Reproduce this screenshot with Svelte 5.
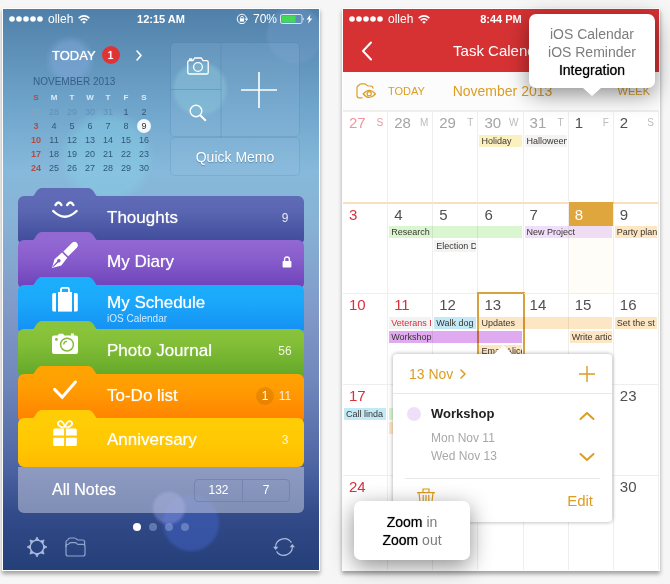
<script>
  const miniHead = ['S', 'M', 'T', 'W', 'T', 'F', 'S'];
  const miniWeeks = [
    [27, 28, 29, 30, 31, 1, 2],
    [3, 4, 5, 6, 7, 8, 9],
    [10, 11, 12, 13, 14, 15, 16],
    [17, 18, 19, 20, 21, 22, 23],
    [24, 25, 26, 27, 28, 29, 30]
  ];

  const folders = [
    { id: 'thoughts', name: 'Thoughts', count: '9' },
    { id: 'diary', name: 'My Diary', locked: true },
    { id: 'schedule', name: 'My Schedule', sub: 'iOS Calendar' },
    { id: 'photo', name: 'Photo Journal', count: '56' },
    { id: 'todo', name: 'To-Do list', count: '11', badge: '1' },
    { id: 'anniversary', name: 'Anniversary', count: '3' }
  ];

  const weeks = [
    {
      days: [27, 28, 29, 30, 31, 1, 2],
      events: [
        { t: 'Holiday', col: 4, slot: 1, tone: 'yellow' },
        { t: 'Halloween', col: 5, slot: 1, tone: 'grey' }
      ]
    },
    {
      days: [3, 4, 5, 6, 7, 8, 9],
      events: [
        { t: 'Research', col: 2, span: 3, slot: 1, tone: 'green' },
        { t: 'New Project', col: 5, span: 2, slot: 1, tone: 'lilac' },
        { t: 'Party plan', col: 7, slot: 1, tone: 'sand' },
        { t: 'Election Day', col: 3, slot: 2, tone: 'grey' }
      ]
    },
    {
      days: [10, 11, 12, 13, 14, 15, 16],
      holiday: 11,
      events: [
        { t: 'Veterans Day', col: 2, slot: 1, tone: 'holiday' },
        { t: 'Walk dog', col: 3, slot: 1, tone: 'blue' },
        { t: 'Updates', col: 4, span: 3, slot: 1, tone: 'sand' },
        { t: 'Set the st', col: 7, slot: 1, tone: 'sand' },
        { t: 'Workshop', col: 2, span: 3, slot: 2, tone: 'purple' },
        { t: 'Write article', col: 6, slot: 2, tone: 'sand' },
        { t: 'Email Alice', col: 4, slot: 3, tone: 'sand' }
      ]
    },
    {
      days: [17, 18, 19, 20, 21, 22, 23],
      events: [
        { t: 'Call linda', col: 1, slot: 1, tone: 'blue' },
        { t: '', col: 2, slot: 1, tone: 'green' },
        { t: '', col: 2, slot: 2, tone: 'sand' },
        { t: '', col: 6, slot: 1, tone: 'sand' }
      ]
    },
    { days: [24, 25, 26, 27, 28, 29, 30], events: [] }
  ];
</script>

{#snippet carrier()}
  <span class="carrier">
    <svg width="34" height="6" viewBox="0 0 34 6" aria-hidden="true">
      {#each [0, 1, 2, 3, 4] as n}<circle cx={3 + n * 7} cy="3" r="2.8" fill="#fff" />{/each}
    </svg>
    <span>olleh</span>
    <svg width="12" height="9" viewBox="0 0 12 9" fill="none" stroke="#fff" stroke-width="1.5" aria-hidden="true">
      <path d="M.6 3.1Q6-1.4 11.4 3.1M2.6 5.3Q6 2.5 9.4 5.3" />
      <path d="M6 8.8 4.1 6.9Q6 5.4 7.9 6.9Z" fill="#fff" stroke="none" />
    </svg>
  </span>
{/snippet}

{#snippet folderIcon(id)}
  <svg class="ficon" width="28" height="28" viewBox="0 0 28 28" fill="#fff" aria-hidden="true">
    {#if id === 'thoughts'}
      <g fill="none" stroke="#fff" stroke-width="2.4" stroke-linecap="round">
        <path d="M4.5 8Q7.6 3 10.4 8M16.2 8Q19.4 3 22.4 8M2.2 14Q13.8 25.5 25.6 14" />
      </g>
    {:else if id === 'diary'}
      <path d="M12.4 10.4 21.4 1.6Q23.6-.1 25.8 1.8 27.8 4 26 6.4L17.2 15.3Z" />
      <path d="M1 27 3.5 18.2 11 11.6 16.3 16.8 10.3 24.4ZM2.4 26 7.2 21.4A1.7 1.7 0 1 0 6.2 20.3L1.7 25.2Z" fill-rule="evenodd" />
    {:else if id === 'schedule'}
      <path d="M2.8 7H5V25.6H2.8Q1.2 25.6 1.2 24V8.6Q1.2 7 2.8 7ZM23 7H25.2Q26.8 7 26.8 8.6V24Q26.8 25.6 25.2 25.6H23Z" />
      <path d="M7 6H21V25.6H7Z" />
      <path d="M10 6V3.4Q10 1.9 11.5 1.9H16.5Q18 1.9 18 3.4V6" fill="none" stroke="#fff" stroke-width="1.8" />
    {:else if id === 'photo'}
      <path d="M3 5.4H6.5L8 3.8H12L13.4 5.4H20V3.6H23V5.4H25Q27 5.4 27 7.4V22Q27 24 25 24H3Q1 24 1 22V7.4Q1 5.4 3 5.4Z" />
      <circle cx="16" cy="14.6" r="6.4" fill="none" stroke="#84bd35" stroke-width="1.5" />
      <path d="M12.8 14.6A3.2 3.2 0 0 1 16 11.4" fill="none" stroke="#84bd35" stroke-width="1.4" />
      <circle cx="5.4" cy="9.4" r="1.4" fill="#84bd35" />
    {:else if id === 'todo'}
      <path d="M3.6 14.4 11.2 22.2 24.4 7" fill="none" stroke="#fff" stroke-width="3" stroke-linecap="round" />
    {:else}
      <path d="M3.8 9.4H13.1V16.4H2.2V11Q2.2 9.4 3.8 9.4ZM14.9 9.4H24.2Q25.8 9.4 25.8 11V16.4H14.9ZM2.2 18.8H13.1V27H3.8Q2.2 27 2.2 25.4ZM14.9 18.8H25.8V25.4Q25.8 27 24.2 27H14.9Z" />
      <path d="M13.5 8.6C8 8 5.5 5 7.6 2.8 10 1 12.8 3 14 8 15.2 3 18 1 20.4 2.8 22.5 5 20 8 14.5 8.6" fill="none" stroke="#fff" stroke-width="1.8" />
    {/if}
  </svg>
{/snippet}

{#snippet chevron(d, w, h, sw = 2)}
  <svg width={w} height={h} viewBox="0 0 {w} {h}" fill="none" stroke="currentColor" stroke-width={sw} stroke-linecap="round" stroke-linejoin="round" aria-hidden="true"><path {d} /></svg>
{/snippet}

<main>
  <section class="phone notes">
    <header class="status">
      {@render carrier()}
      <time>12:15 AM</time>
      <span class="power">
        <svg width="12" height="12" viewBox="0 0 12 12" fill="none" stroke="#fff" aria-hidden="true">
          <path d="M9.8 8.6A4.7 4.7 0 1 1 10.6 5.6" />
          <path d="M8.6 5.6H12.4L10.5 8Z" fill="#fff" stroke="none" />
          <rect x="3.9" y="5.4" width="4.2" height="3.2" fill="#fff" stroke="none" />
          <path d="M4.7 5.6V4.6Q4.7 3.3 6 3.3 7.3 3.3 7.3 4.6V5.6" stroke-width=".9" />
        </svg>
        <span>70%</span>
        <svg class="battery" width="33" height="10" viewBox="0 0 33 10" aria-hidden="true">
          <rect x=".5" y=".5" width="21.5" height="9" rx="1.8" fill="none" stroke="#fff" stroke-opacity=".8" />
          <rect x="1.6" y="1.6" width="14" height="6.8" rx=".6" fill="#43d85a" />
          <path d="M23 3.3Q24.6 5 23 6.7Z" fill="#fff" />
          <path d="M30.4 .6 26.6 5.6H29L28 9.6 32.4 4.4H29.8Z" fill="#fff" />
        </svg>
      </span>
    </header>

    <div class="top">
      <div class="mini">
        <button class="today" type="button">
          <span>TODAY</span>
          <b>1</b>
          {@render chevron('M2 2 6 6.5 2 11', 8, 13, 1.6)}
        </button>
        <h2>NOVEMBER 2013</h2>
        <table>
          <thead>
            <tr>{#each miniHead as d}<th scope="col">{d}</th>{/each}</tr>
          </thead>
          <tbody>
            {#each miniWeeks as week, w}
              <tr>
                {#each week as day}
                  <td class:past={w === 0 && day > 7}><span class:now={w === 1 && day === 9}>{day}</span></td>
                {/each}
              </tr>
            {/each}
          </tbody>
        </table>
      </div>
      <div class="quick">
        <button type="button" aria-label="Camera" class="cam">
          <svg width="22" height="18" viewBox="0 0 22 18" fill="none" stroke="#fff" stroke-width="1.3" stroke-linejoin="round" aria-hidden="true">
            <path d="M2.4 3.6H6L7.6 1H14.4L16 3.6H19.6Q21.2 3.6 21.2 5.2V15.4Q21.2 17 19.6 17H2.4Q.8 17 .8 15.4V5.2Q.8 3.6 2.4 3.6ZM2.6 3.4V2H4.8V3.4" />
            <circle cx="11" cy="10" r="4.4" />
          </svg>
        </button>
        <button type="button" aria-label="Add" class="add">
          <svg width="36" height="36" viewBox="0 0 36 36" stroke="#fff" stroke-width="1.6" aria-hidden="true"><path d="M18 0V36M0 18H36" /></svg>
        </button>
        <button type="button" aria-label="Search" class="find">
          <svg width="18" height="18" viewBox="0 0 18 18" fill="none" stroke="#fff" aria-hidden="true">
            <circle cx="7" cy="7" r="5.8" stroke-width="1.4" /><path d="M11.2 11.2 16.8 16.8" stroke-width="2" />
          </svg>
        </button>
        <button type="button" class="memo">Quick Memo</button>
      </div>
    </div>

    <nav class="stack" aria-label="Folders">
      {#each folders as f}
        <button type="button" class="folder {f.id}">
          <svg class="tab" width="66" height="9" viewBox="0 0 66 9" aria-hidden="true"><path d="M0 9C3 8 4 1 9 0H57C62 1 63 8 66 9Z" /></svg>
          {@render folderIcon(f.id)}
          <span class="name">{f.name}{#if f.sub}<small>{f.sub}</small>{/if}</span>
          {#if f.badge}<span class="badge">{f.badge}</span>{/if}
          {#if f.count}<span class="count">{f.count}</span>{/if}
          {#if f.locked}
            <svg class="lock" width="10" height="12" viewBox="0 0 10 12" aria-hidden="true">
              <rect x=".6" y="5" width="8.8" height="6.6" rx=".8" fill="#fff" />
              <path d="M2.6 5.4V3.4Q2.6 1 5 1 7.4 1 7.4 3.4V5.4" fill="none" stroke="#fff" stroke-width="1.4" />
            </svg>
          {/if}
        </button>
      {/each}
      <div class="all">
        <span>All Notes</span>
        <div class="seg"><button type="button">132</button><button type="button">7</button></div>
      </div>
    </nav>

    <div class="pager"><i class="on"></i><i></i><i></i><i></i></div>

    <footer>
      <button type="button" aria-label="Settings">
        <svg width="22" height="22" viewBox="0 0 22 22" fill="none" stroke="#a9bbdc" stroke-width="1.3" aria-hidden="true">
          <circle cx="11" cy="11" r="6.8" />
          {#each [0, 45, 90, 135, 180, 225, 270, 315] as a}
            <path d="M9.4 4.2 11 1 12.6 4.2Z" fill="#a9bbdc" stroke-width=".8" transform="rotate({a} 11 11)" />
          {/each}
        </svg>
      </button>
      <button type="button" aria-label="Folders">
        <svg width="21" height="20" viewBox="0 0 21 20" fill="none" stroke="#8fa5cf" stroke-width="1.2" stroke-linejoin="round" aria-hidden="true">
          <path d="M1 17V9Q1 7.4 2.6 7.4 3.8 7.2 4.2 6.4 4.8 5.6 6 5.6H10Q11.2 5.6 11.8 6.6 12.4 7.4 13.6 7.4H18Q20 7.4 20 9.4V17Q20 19 18 19H3Q1 19 1 17Z" />
          <path d="M1 10V5Q1 3.4 2.6 3 3.6 1 5.4 1H9.6Q11 1 11.6 2.2 12.2 3 13.4 3H17.6Q19.6 3 19.6 5V8.4" />
        </svg>
      </button>
      <button type="button" aria-label="Sync" class="sync">
        <svg width="22" height="20" viewBox="0 0 22 20" fill="none" stroke="#a9bbdc" stroke-width="1.2" aria-hidden="true">
          <path d="M2.6 10.6A8.6 8.6 0 0 1 18.4 5.6M19.4 9.4A8.6 8.6 0 0 1 3.6 14.4" />
          <path d="M0 9.8H5.4L2.7 13ZM16.6 10.2H22L19.3 7Z" fill="#a9bbdc" stroke="none" />
        </svg>
      </button>
    </footer>
  </section>

  <section class="phone tasks">
    <div class="red">
      <header class="status">
        {@render carrier()}
        <time>8:44 PM</time>
        <span class="power"></span>
      </header>
      <div class="nav">
        <button type="button" aria-label="Back">{@render chevron('M10 1.5 2 10 10 18.5', 12, 20, 2)}</button>
        <h1>Task Calendar</h1>
      </div>
    </div>
    <div class="tools">
      <button type="button" aria-label="Show calendars">
        <svg width="20" height="16" viewBox="0 0 20 16" fill="none" stroke="currentColor" stroke-width="1.2" aria-hidden="true">
          <path d="M6.6 14.8H3Q1 14.8 1 12.8V4.4Q1 3 2.6 2.6 3.6 .8 5.4 .8H8.4Q10 .8 10.6 2 11.2 3 12.4 3H14.4Q17 3 17 5.4" />
          <path d="M7.2 11Q13.2 3.6 19.4 11 13.2 18 7.2 11Z" /><circle cx="13.2" cy="10.8" r="2.1" />
        </svg>
      </button>
      <button type="button" class="tday">TODAY</button>
      <h2>November 2013</h2>
      <button type="button">WEEK</button>
    </div>

    <div class="cal">
      {#each weeks as week, w}
        <div class="week">
          {#each week.days as day, i}
            <div
              class="day"
              class:sun={i === 0 || day === week.holiday}
              class:out={w === 0 && day > 7}
              class:current={w === 1 && day === 8}
              class:picked={w === 2 && day === 13}
              style="grid-column: {i + 1}"
            >
              <span>{day}{#if w === 0}<small>{miniHead[i]}</small>{/if}</span>
            </div>
          {/each}
          {#each week.events as e}
            <div class="event {e.tone}" style="grid-column: {e.col} / span {e.span ?? 1}; grid-row: {e.slot + 1}">{e.t}</div>
          {/each}
        </div>
      {/each}

      <article class="pop">
        <header>
          <button type="button" class="date">13 Nov {@render chevron('M2 2 6 6 2 10', 8, 12, 1.6)}</button>
          <button type="button" aria-label="Add event">
            <svg width="16" height="16" viewBox="0 0 16 16" stroke="currentColor" stroke-width="1.4" aria-hidden="true"><path d="M8 0V16M0 8H16" /></svg>
          </button>
        </header>
        <div class="detail">
          <i></i>
          <div>
            <h3>Workshop</h3>
            <p>Mon Nov 11</p>
            <p>Wed Nov 13</p>
          </div>
          <div class="step">
            <button type="button" aria-label="Previous">{@render chevron('M1.5 8 8 2 14.5 8', 16, 10)}</button>
            <button type="button" aria-label="Next">{@render chevron('M1.5 2 8 8 14.5 2', 16, 10)}</button>
          </div>
        </div>
        <footer>
          <button type="button" aria-label="Delete" class="trash">
            <svg width="18" height="18" viewBox="0 0 18 18" fill="none" stroke="currentColor" stroke-width="1.2" aria-hidden="true">
              <path d="M0 4.6H18M6 4.4V1H12V4.4M2 4.8 3.4 17.2H14.6L16 4.8M6.2 7V15M9 7V15M11.8 7V15" />
            </svg>
          </button>
          <button type="button">Edit</button>
        </footer>
      </article>
    </div>

    <aside class="tip sync-tip">iOS Calendar<br />iOS Reminder<br /><b>Integration</b></aside>
    <aside class="tip zoom-tip"><b>Zoom</b> in<br /><b>Zoom</b> out</aside>
  </section>
</main>

<style>
  :global(body) {
    margin: 0;
    background: #f6f6f6;
    font-family: 'Liberation Sans', Arial, sans-serif;
  }
  button {
    font: inherit;
    color: inherit;
    background: none;
    border: 0;
    padding: 0;
    margin: 0;
    display: flex;
    align-items: center;
    cursor: pointer;
  }
  h1, h2, h3, p {
    margin: 0;
    font-weight: 400;
  }
  svg {
    display: block;
    flex: none;
  }
  main {
    display: grid;
    grid-template-columns: 1fr 1fr;
    gap: 24px;
    padding: 9px 11px 14px 3px;
  }
  .phone {
    position: relative;
    min-width: 0;
    display: flex;
    flex-direction: column;
    box-shadow: 0 0 0 1px #fff, 0 3px 4px 1px rgba(0, 0, 0, 0.35);
  }
  .status {
    display: grid;
    grid-template-columns: 1fr auto 1fr;
    align-items: center;
    height: 20px;
    padding: 0 6px;
    color: #fff;
    font-size: 12px;
  }
  .status time {
    font-size: 11px;
    font-weight: 700;
  }
  .carrier, .power {
    display: flex;
    align-items: center;
    gap: 5px;
  }
  .power {
    justify-content: flex-end;
  }
  .battery {
    margin-left: -2px;
  }

  /* Notes home screen */
  .notes {
    color: #fff;
    background:
      radial-gradient(circle at 166px 499px, rgba(150, 160, 235, 0.4) 14px, transparent 18px),
      radial-gradient(circle at 188px 514px, rgba(62, 92, 185, 0.6) 26px, transparent 30px),
      radial-gradient(circle at 67px 51px, rgba(130, 170, 220, 0.5) 17px, transparent 25px),
      radial-gradient(circle at 292px 26px, rgba(120, 160, 210, 0.3) 26px, transparent 30px),
      radial-gradient(circle at 197px 80px, rgba(135, 200, 215, 0.45) 24px, transparent 29px),
      radial-gradient(circle at 104px 148px, rgba(135, 215, 235, 0.35) 36px, transparent 48px),
      linear-gradient(#5080a9, #6fa4ca 17%, #86b9db 29%, #87b2d5 38%, #8099c8 54%, #7088bb 66%, #4c63a2 82%, #324b89 90%, #253f79);
  }
  .top {
    display: flex;
    justify-content: space-between;
    padding: 14px 20px 21px 24px;
  }
  .mini {
    width: 126px;
  }
  .today {
    height: 24px;
    padding-left: 25px;
    font-size: 13px;
    text-shadow: 0 0 1px #fff;
  }
  .today b {
    width: 18px;
    line-height: 18px;
    margin: 0 15px 0 6px;
    border-radius: 50%;
    background: #e03434;
    font-size: 11px;
    font-weight: 400;
    text-align: center;
  }
  .mini h2 {
    margin: 8px 0 2px 6px;
    font-size: 10px;
    line-height: 14px;
    color: #355f85;
  }
  table {
    width: 100%;
    table-layout: fixed;
    border-collapse: collapse;
    font-size: 9px;
    line-height: 14px;
    text-align: center;
    color: #2f5876;
  }
  th, td {
    padding: 0;
    height: 14px;
  }
  th {
    font-size: 8px;
    color: #dceaf5;
  }
  td.past {
    color: #5f91b3;
  }
  th:first-child, td:first-child {
    color: #b8493f;
    font-weight: 700;
  }
  td.past:first-child {
    color: #8ba3ba;
    font-weight: 400;
  }
  .now {
    display: inline-block;
    width: 14px;
    border-radius: 50%;
    background: #f3f8fc;
    color: #333;
  }
  .quick {
    display: grid;
    grid-template: 46px 46px 38px / 50px 78px;
    gap: 1px 0;
  }
  .quick button {
    justify-content: center;
    background: rgba(160, 200, 230, 0.16);
    box-shadow: 0 0 0 1px rgba(70, 120, 170, 0.18);
  }
  .quick .cam {
    border-radius: 4px 0 0 0;
    padding-left: 3px;
  }
  .quick .add {
    grid-row: span 2;
    border-radius: 0 4px 4px 0;
    padding-right: 2px;
  }
  .quick .find {
    border-radius: 0 0 0 4px;
    padding-left: 3px;
  }
  .quick .memo {
    grid-column: span 2;
    margin-top: 1px;
    border-radius: 4px;
    font-size: 14px;
    text-shadow: 0 1px 1px rgba(50, 90, 130, 0.5);
  }
  .stack {
    margin: 0 15px;
    display: flex;
    flex-direction: column;
  }
  .folder {
    position: relative;
    min-height: 49px;
    margin-bottom: -5px;
    padding: 0 12px 5px 33px;
    border-radius: 6px;
    text-align: left;
  }
  .folder:nth-child(even) {
    margin-bottom: -4px;
  }
  .tab {
    position: absolute;
    left: 14px;
    top: -8px;
  }
  .ficon {
    margin: 0 28px 14px 0;
  }
  .name {
    flex: 1;
    font-size: 17px;
    line-height: 20px;
    text-shadow: 0 0 1px rgba(255, 255, 255, 0.7);
  }
  .schedule .name {
    padding-top: 4px;
  }
  .name small {
    display: block;
    font-size: 10px;
    line-height: 12px;
    color: rgba(255, 255, 255, 0.8);
    text-shadow: none;
  }
  .count {
    min-width: 14px;
    font-size: 12px;
    text-align: center;
    color: rgba(255, 255, 255, 0.85);
  }
  .badge {
    width: 18px;
    line-height: 18px;
    margin-right: 4px;
    border-radius: 50%;
    background: rgba(170, 90, 0, 0.25);
    font-size: 12px;
    text-align: center;
  }
  .thoughts { background: linear-gradient(#5f6bb6, #5a66b1 30%, #414e9c 90%); }
  .thoughts .tab { fill: #5f6bb6; }
  .diary { background: linear-gradient(#9268d3, #8b60ce 30%, #7146bd 90%); }
  .diary .tab { fill: #9268d3; }
  .schedule { background: linear-gradient(#1cadfc, #1ba9fb 30%, #1592f4 90%); }
  .schedule .tab { fill: #1cadfc; }
  .photo { background: linear-gradient(#8ac43c, #83be37 30%, #66aa2a 90%); }
  .photo .tab { fill: #8ac43c; }
  .todo { background: linear-gradient(#ffa303, #ff9c02 30%, #ff8400 90%); }
  .todo .tab { fill: #ffa303; }
  .anniversary { background: linear-gradient(#ffcd06, #ffc803 50%, #ffbb00); z-index: 1; }
  .anniversary .tab { fill: #ffcd06; }
  .all {
    display: flex;
    justify-content: space-between;
    align-items: center;
    height: 46px;
    margin-top: 4px;
    padding: 0 14px 0 34px;
    border-radius: 0 0 6px 6px;
    background: rgba(205, 210, 225, 0.5);
    font-size: 16px;
    text-shadow: 0 0 1px rgba(255, 255, 255, 0.6);
  }
  .seg {
    display: grid;
    grid-template-columns: 1fr 1fr;
    width: 94px;
    border: 1px solid #7584ae;
    border-radius: 4px;
  }
  .seg button {
    justify-content: center;
    height: 21px;
    font-size: 12px;
  }
  .seg button + button {
    border-left: 1px solid #7584ae;
  }
  .pager {
    display: flex;
    justify-content: center;
    gap: 8px;
    padding: 10px 0 5px;
  }
  .pager i {
    width: 8px;
    height: 8px;
    border-radius: 50%;
    background: rgba(150, 170, 215, 0.5);
  }
  .pager .on {
    background: #fff;
  }
  .notes footer {
    display: flex;
    gap: 17px;
    padding: 0 24px 12px 23px;
  }
  .sync {
    margin-left: auto;
  }

  /* Task calendar screen */
  .tasks {
    background: #fff;
  }
  .red {
    background: #d63234;
    color: #fff;
  }
  .nav {
    display: grid;
    grid-template-columns: 1fr auto 1fr;
    align-items: center;
    height: 43px;
    padding: 0 18px;
  }
  .nav h1 {
    font-size: 15px;
  }
  .tools {
    display: grid;
    grid-template-columns: 32px 1fr auto 1fr;
    align-items: center;
    height: 38px;
    padding: 0 9px 0 13px;
    border-bottom: 1px solid #eee;
    background: #fcfcfc;
    color: #dc9d22;
    font-size: 11px;
  }
  .tools h2 {
    font-size: 14px;
    margin-right: 33px;
  }
  .tools button:last-child {
    justify-self: end;
  }
  .cal {
    position: relative;
    flex: 1;
    display: flex;
    flex-direction: column;
  }
  .week {
    min-height: 91px;
    display: grid;
    grid-template-columns: repeat(7, minmax(0, 1fr));
    grid-template-rows: 22px 12px 12px 12px 1fr;
    row-gap: 2px;
  }
  .week:nth-child(5) {
    flex: 1;
  }
  .day {
    grid-row: 1 / -1;
    border: 0 solid #eee;
    border-width: 1px 1px 0 0;
    font-size: 15px;
    color: #505050;
  }
  .day span {
    display: flex;
    justify-content: space-between;
    align-items: center;
    height: 20px;
    padding: 0 4px 2px 6px;
  }
  .day small {
    font-size: 10px;
    color: #bbb;
  }
  .week:nth-child(2) .day {
    border-top: 2px solid #f8dfbd;
  }
  .day.out {
    color: #a5a5a5;
  }
  .day.sun {
    color: #d8303c;
  }
  .day.sun.out, .day.sun.out small {
    color: #eb979d;
  }
  .day.current {
    background: #fffdf8;
  }
  .week .day.current {
    border-top-color: #e0a63e;
  }
  .day.current span {
    background: #e0a63e;
    color: #fff;
  }
  .day.picked {
    outline: 2px solid #d6a13f;
    outline-offset: -1px;
  }
  .event {
    margin: 0 2px 0 1px;
    padding-left: 2px;
    overflow: hidden;
    white-space: nowrap;
    font-size: 9px;
    line-height: 12px;
    color: #3a3530;
    mix-blend-mode: multiply;
  }
  .yellow { background: #fbf1c0; }
  .grey { background: #f3f3f3; }
  .green { background: #d9f6d1; }
  .lilac { background: #f0dffa; }
  .sand { background: #fde6c3; }
  .blue { background: #c3e9f7; }
  .purple { background: #e0aaf0; }
  .holiday { background: #f3f3f3; color: #d8303c; }

  .pop {
    position: absolute;
    left: 50px;
    right: 47px;
    top: 243px;
    border-radius: 4px;
    background: #fff;
    box-shadow: 0 0 4px rgba(0, 0, 0, 0.35);
    color: #dc9d22;
  }
  .pop::before {
    content: '';
    position: absolute;
    left: 101px;
    top: -9px;
    border: solid transparent;
    border-width: 0 9px 9px;
    border-bottom-color: #fff;
  }
  .pop header {
    display: flex;
    justify-content: space-between;
    align-items: center;
    height: 39px;
    padding: 0 17px 0 16px;
    border-bottom: 1px solid #e8e8e8;
  }
  .date {
    gap: 6px;
    font-size: 14px;
  }
  .detail {
    display: flex;
    margin: 0 12px;
    padding: 10px 5px 13px 2px;
    border-bottom: 1px solid #e8e8e8;
  }
  .detail i {
    width: 14px;
    height: 14px;
    margin: 3px 10px 0 0;
    border-radius: 50%;
    background: #f0dffa;
  }
  .detail h3 {
    font-size: 13px;
    font-weight: 700;
    line-height: 20px;
    margin-bottom: 5px;
    color: #222;
  }
  .detail p {
    font-size: 12px;
    line-height: 18px;
    color: #a8a8a8;
  }
  .step {
    margin-left: auto;
    display: flex;
    flex-direction: column;
    justify-content: space-between;
    padding: 7px 0 3px;
  }
  .pop footer {
    display: flex;
    justify-content: space-between;
    align-items: center;
    height: 43px;
    padding: 0 19px 0 24px;
    font-size: 15px;
  }
  .trash {
    align-self: flex-start;
    padding-top: 9px;
  }
  .tip {
    position: absolute;
    border-radius: 7px;
    background: #fff;
    box-shadow: 0 6px 22px rgba(0, 0, 0, 0.45);
    color: #7d7d7d;
    font-size: 14px;
    line-height: 18px;
    text-align: center;
  }
  .tip b {
    font-weight: 400;
    color: #000;
    text-shadow: 0 0 1px rgba(0, 0, 0, 0.7);
  }
  .sync-tip {
    top: 5px;
    right: 4px;
    width: 126px;
    padding: 11px 0 9px;
  }
  .sync-tip::after {
    content: '';
    position: absolute;
    left: 54px;
    top: 100%;
    border: solid transparent;
    border-width: 8px 9px 0;
    border-top-color: #fff;
  }
  .zoom-tip {
    left: 11px;
    bottom: 10px;
    width: 116px;
    padding: 12px 0 11px;
  }
</style>
